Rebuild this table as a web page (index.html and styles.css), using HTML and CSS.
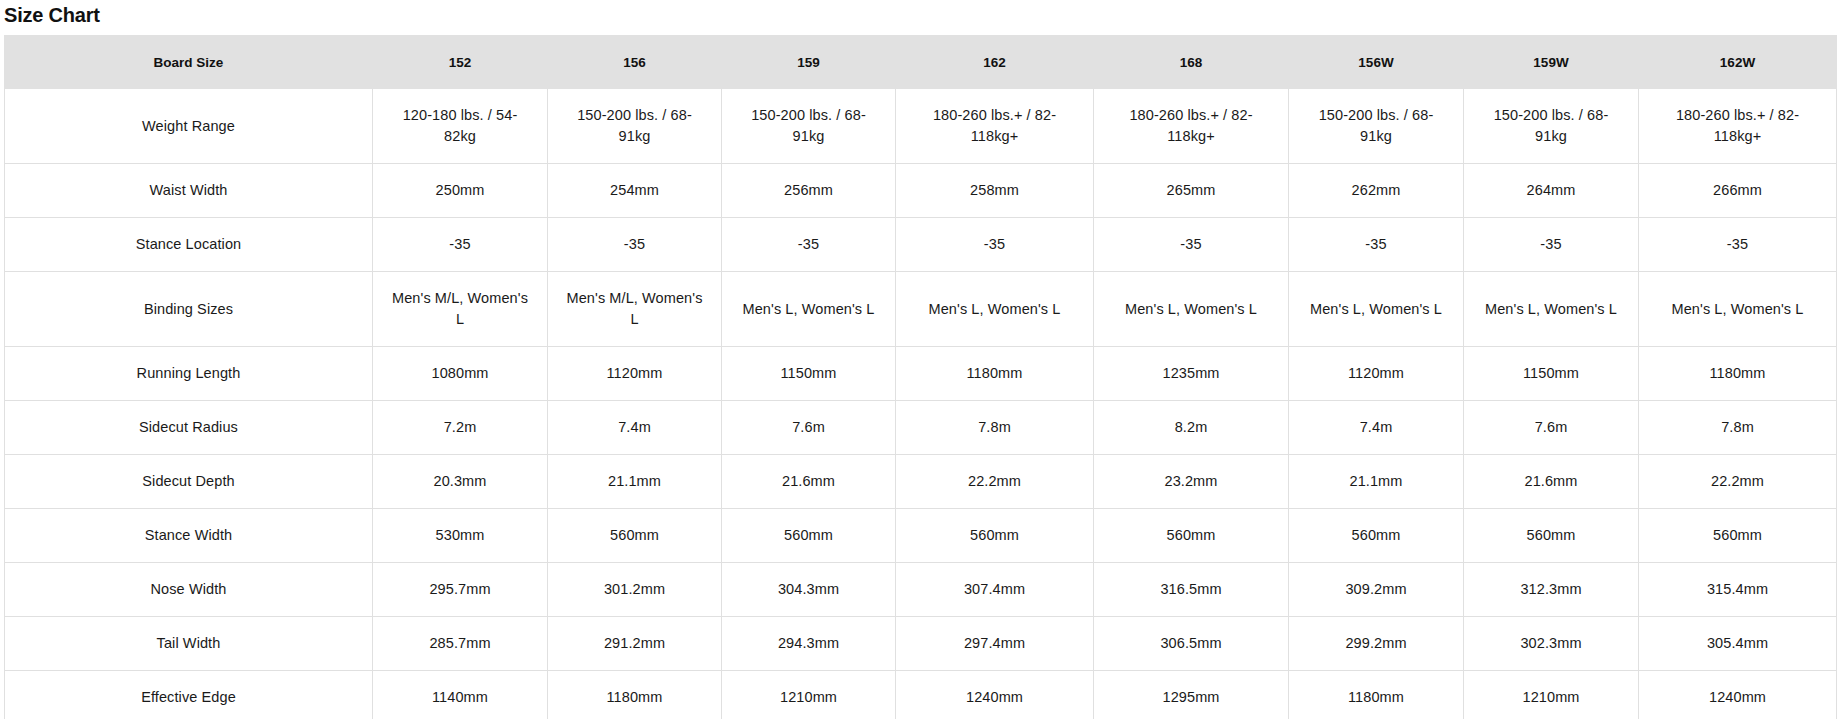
FILE: index.html
```html
<!DOCTYPE html>
<html lang="en">
<head>
<meta charset="utf-8">
<title>Size Chart</title>
<link rel="stylesheet" href="styles.css">
</head>
<body>
<div class="size-chart">
  <h2 class="size-chart__title">Size Chart</h2>
  <table class="size-table">
    <colgroup>
      <col class="col-label">
      <col class="col-a"><col class="col-b"><col class="col-b"><col class="col-w">
      <col class="col-v"><col class="col-a"><col class="col-a"><col class="col-w">
    </colgroup>
    <thead>
      <tr>
        <th>Board Size</th><th>152</th><th>156</th><th>159</th><th>162</th><th>168</th><th>156W</th><th>159W</th><th>162W</th>
      </tr>
    </thead>
    <tbody>
      <tr>
        <td>Weight Range</td><td>120-180 lbs. / 54-82kg</td><td>150-200 lbs. / 68-91kg</td><td>150-200 lbs. / 68-91kg</td><td>180-260 lbs.+ / 82-118kg+</td><td>180-260 lbs.+ / 82-118kg+</td><td>150-200 lbs. / 68-91kg</td><td>150-200 lbs. / 68-91kg</td><td>180-260 lbs.+ / 82-118kg+</td>
      </tr>
      <tr>
        <td>Waist Width</td><td>250mm</td><td>254mm</td><td>256mm</td><td>258mm</td><td>265mm</td><td>262mm</td><td>264mm</td><td>266mm</td>
      </tr>
      <tr>
        <td>Stance Location</td><td>-35</td><td>-35</td><td>-35</td><td>-35</td><td>-35</td><td>-35</td><td>-35</td><td>-35</td>
      </tr>
      <tr>
        <td>Binding Sizes</td><td>Men's M/L, Women's L</td><td>Men's M/L, Women's L</td><td>Men's L, Women's L</td><td>Men's L, Women's L</td><td>Men's L, Women's L</td><td>Men's L, Women's L</td><td>Men's L, Women's L</td><td>Men's L, Women's L</td>
      </tr>
      <tr>
        <td>Running Length</td><td>1080mm</td><td>1120mm</td><td>1150mm</td><td>1180mm</td><td>1235mm</td><td>1120mm</td><td>1150mm</td><td>1180mm</td>
      </tr>
      <tr>
        <td>Sidecut Radius</td><td>7.2m</td><td>7.4m</td><td>7.6m</td><td>7.8m</td><td>8.2m</td><td>7.4m</td><td>7.6m</td><td>7.8m</td>
      </tr>
      <tr>
        <td>Sidecut Depth</td><td>20.3mm</td><td>21.1mm</td><td>21.6mm</td><td>22.2mm</td><td>23.2mm</td><td>21.1mm</td><td>21.6mm</td><td>22.2mm</td>
      </tr>
      <tr>
        <td>Stance Width</td><td>530mm</td><td>560mm</td><td>560mm</td><td>560mm</td><td>560mm</td><td>560mm</td><td>560mm</td><td>560mm</td>
      </tr>
      <tr>
        <td>Nose Width</td><td>295.7mm</td><td>301.2mm</td><td>304.3mm</td><td>307.4mm</td><td>316.5mm</td><td>309.2mm</td><td>312.3mm</td><td>315.4mm</td>
      </tr>
      <tr>
        <td>Tail Width</td><td>285.7mm</td><td>291.2mm</td><td>294.3mm</td><td>297.4mm</td><td>306.5mm</td><td>299.2mm</td><td>302.3mm</td><td>305.4mm</td>
      </tr>
      <tr>
        <td>Effective Edge</td><td>1140mm</td><td>1180mm</td><td>1210mm</td><td>1240mm</td><td>1295mm</td><td>1180mm</td><td>1210mm</td><td>1240mm</td>
      </tr>
    </tbody>
  </table>
</div>
</body>
</html>
```

FILE: styles.css
```css
html, body {
  margin: 0;
  padding: 0;
  background: #ffffff;
}

body {
  font-family: "Liberation Sans", Arial, Helvetica, sans-serif;
  color: #1a1a1a;
}

.size-chart {
  padding: 0 8px 0 4px;
}

.size-chart__title {
  margin: 3px 0 8px;
  font-size: 20px;
  line-height: 24px;
  font-weight: 700;
  color: #111111;
  letter-spacing: -0.2px;
}

.size-table {
  width: 1832px;
  table-layout: fixed;
  border-collapse: collapse;
  text-align: center;
}

.col-label { width: 368px; }
.col-a { width: 175px; }
.col-b { width: 174px; }
.col-w { width: 198px; }
.col-v { width: 195px; }

.size-table th {
  background: #e1e1e1;
  font-size: 13.5px;
  font-weight: 700;
  line-height: 21px;
  color: #111111;
  padding: 15.5px 16px;
  border: 1px solid #e1e1e1;
}

.size-table td {
  font-size: 14.5px;
  line-height: 21px;
  letter-spacing: 0.1px;
  padding: 16px 16px;
  border: 1px solid #e0e0e0;
  color: #1a1a1a;
  vertical-align: middle;
}
```
